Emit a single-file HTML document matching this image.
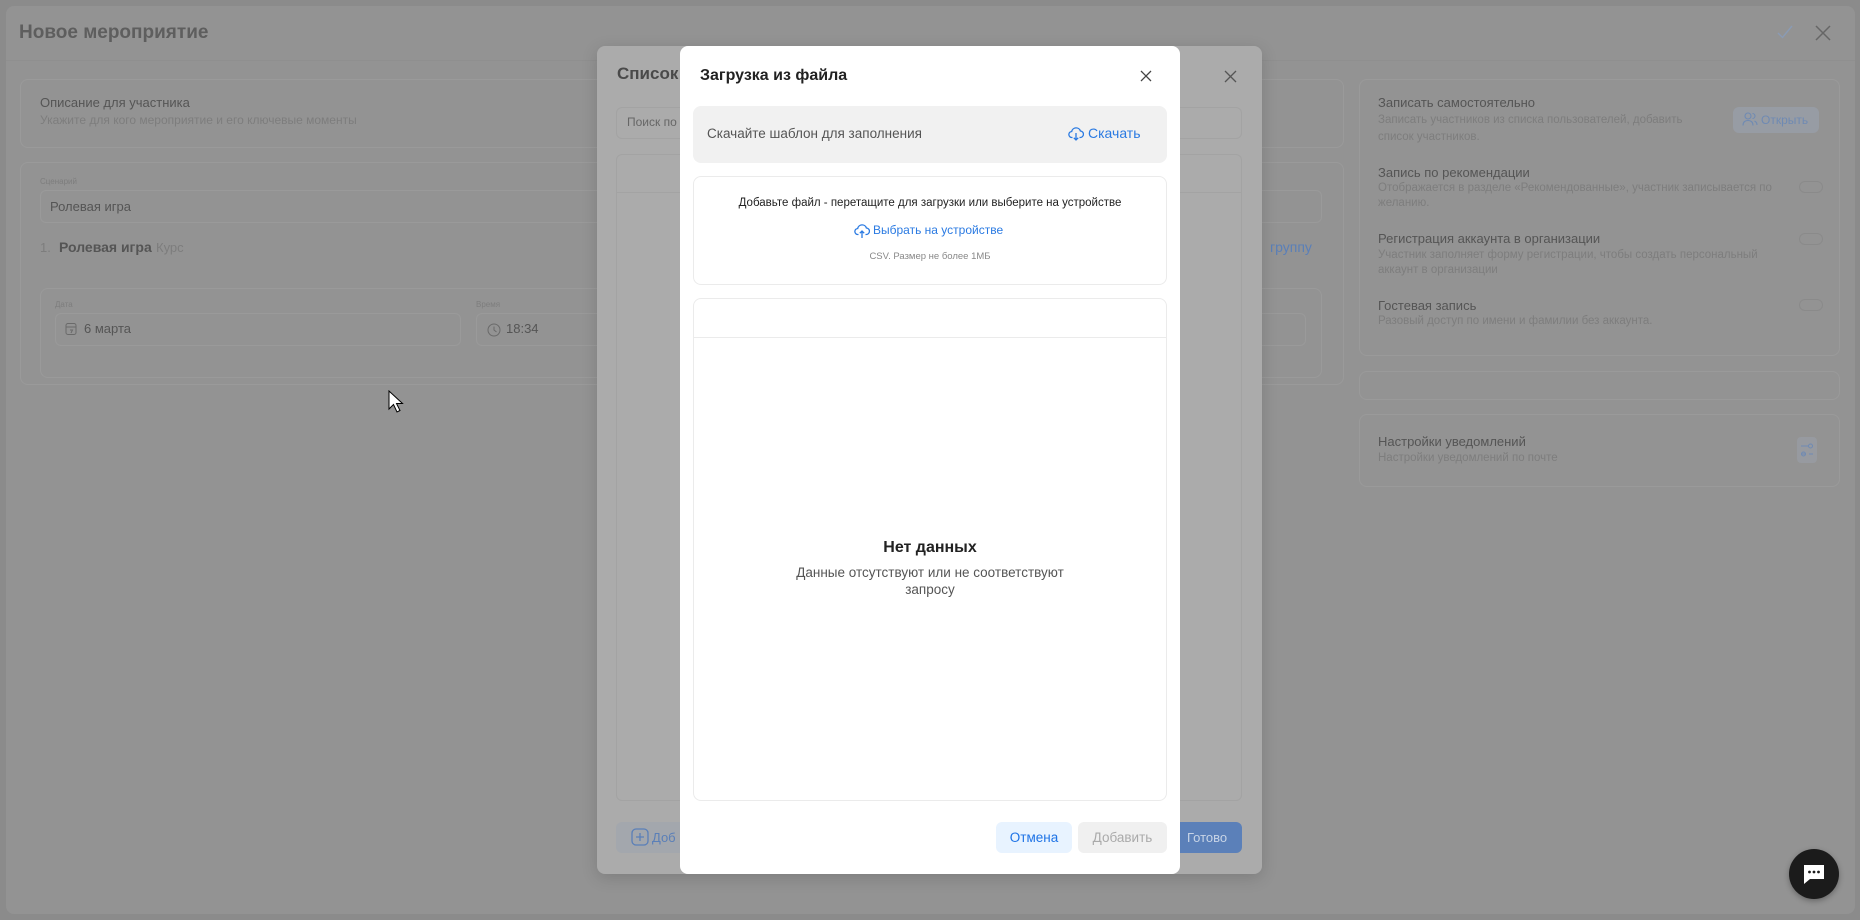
<!DOCTYPE html>
<html><head><meta charset="utf-8">
<style>
*{box-sizing:border-box;margin:0;padding:0}
body{width:1860px;height:920px;overflow:hidden;background:#8b8b8b;font-family:"Liberation Sans",sans-serif;position:relative}
.abs{position:absolute}
.panel{left:6px;top:6px;width:1849px;height:908px;background:#939393;border-radius:8px}
.card{position:absolute;border:1px solid #9a9a9a;border-radius:8px}
.g1{color:#555}.g2{color:#7d7d7d}
.inp{position:absolute;border:1px solid #9a9a9a;border-radius:6px}
.m2{left:597px;top:46px;width:665px;height:828px;background:#ababab;border-radius:8px;box-shadow:0 4px 16px rgba(0,0,0,.15)}
.m1{left:680px;top:46px;width:500px;height:828px;background:#fff;border-radius:8px}
.tog{position:absolute;width:24px;height:12px;border:1px solid #8a8a8a;border-radius:7px}
</style></head><body>
<div class="abs panel"></div>
<div class="abs" style="left:19px;top:22px;font-size:19px;font-weight:bold;color:#5e5e5e">Новое мероприятие</div>
<div class="abs" style="left:6px;top:60px;width:1849px;height:1px;background:#8f8f8f"></div>
<svg class="abs" style="left:1777px;top:25px" width="16" height="14"><path d="M1 8L5.5 12.5L15 1" fill="none" stroke="#8a9bb4" stroke-width="1.4"/></svg>
<svg class="abs" style="left:1815px;top:25px" width="16" height="16"><path d="M1 1L15 15M15 1L1 15" stroke="#666" stroke-width="1.5"/></svg>

<div class="card" style="left:20px;top:79px;width:1324px;height:69px"></div>
<div class="abs g1" style="left:40px;top:95px;font-size:13px">Описание для участника</div>
<div class="abs g2" style="left:40px;top:113px;font-size:12px">Укажите для кого мероприятие и его ключевые моменты</div>
<div class="card" style="left:20px;top:162px;width:1324px;height:223px"></div>
<div class="abs g2" style="left:40px;top:177px;font-size:8px">Сценарий</div>
<div class="inp" style="left:40px;top:190px;width:1282px;height:33px"></div>
<div class="abs g1" style="left:50px;top:199px;font-size:13px">Ролевая игра</div>
<div class="abs g2" style="left:40px;top:240px;font-size:13px">1.</div>
<div class="abs g1" style="left:59px;top:239px;font-size:14px;font-weight:bold">Ролевая игра</div>
<div class="abs g2" style="left:156px;top:240px;font-size:13px">Курс</div>
<div class="abs" style="left:1270px;top:239px;font-size:14px;color:#5a7fb8">группу</div>
<div class="card" style="left:40px;top:288px;width:1282px;height:90px"></div>
<div class="abs g2" style="left:55px;top:300px;font-size:8px">Дата</div>
<div class="inp" style="left:55px;top:313px;width:406px;height:33px"></div>
<svg class="abs" style="left:65px;top:322px" width="12" height="14" fill="none" stroke="#6a6a6a" stroke-width="1"><rect x="1" y="1.5" width="10" height="11" rx="2"/><path d="M1 5H11M5 8H7.5L6 11"/></svg>
<div class="abs g1" style="left:84px;top:321px;font-size:13px">6 марта</div>
<div class="abs g2" style="left:476px;top:300px;font-size:8px">Время</div>
<div class="inp" style="left:476px;top:313px;width:830px;height:33px"></div>
<svg class="abs" style="left:487px;top:323px" width="14" height="14" fill="none" stroke="#6a6a6a" stroke-width="1"><circle cx="7" cy="7" r="6"/><path d="M7 3.5V7L9.5 9"/></svg>
<div class="abs g1" style="left:506px;top:321px;font-size:13px">18:34</div>

<div class="card" style="left:1359px;top:79px;width:481px;height:277px"></div>
<div class="abs g1" style="left:1378px;top:95px;font-size:13px">Записать самостоятельно</div>
<div class="abs g2" style="left:1378px;top:112px;font-size:11.5px;line-height:17px;width:320px">Записать участников из списка пользователей, добавить список участников.</div>
<div class="abs" style="left:1733px;top:107px;width:86px;height:26px;background:#979ca4;border-radius:6px;color:#6f8ab3;font-size:12px;padding:6px 0 0 28px">Открыть</div>
<svg class="abs" style="left:1742px;top:111px" width="16" height="16" fill="none" stroke="#6f8ab3" stroke-width="1.1"><circle cx="6" cy="5" r="3"/><path d="M1 14.5C1 11 3 9.5 6 9.5S11 11 11 14.5M10.5 2.5A2.5 2.5 0 0 1 10.5 7.5M12.5 10C14 10.7 15 12 15 14"/></svg>
<div class="abs g1" style="left:1378px;top:165px;font-size:13px">Запись по рекомендации</div>
<div class="abs g2" style="left:1378px;top:181px;font-size:11.5px;line-height:15px;width:400px">Отображается в разделе «Рекомендованные», участник записывается по желанию.</div>
<div class="tog" style="left:1799px;top:181px"></div>
<div class="abs g1" style="left:1378px;top:231px;font-size:13px">Регистрация аккаунта в организации</div>
<div class="abs g2" style="left:1378px;top:248px;font-size:11.5px;line-height:15px;width:400px">Участник заполняет форму регистрации, чтобы создать персональный аккаунт в организации</div>
<div class="tog" style="left:1799px;top:233px"></div>
<div class="abs g1" style="left:1378px;top:298px;font-size:13px">Гостевая запись</div>
<div class="abs g2" style="left:1378px;top:315px;font-size:11.5px">Разовый доступ по имени и фамилии без аккаунта.</div>
<div class="tog" style="left:1799px;top:299px"></div>
<div class="card" style="left:1359px;top:371px;width:481px;height:29px"></div>
<div class="card" style="left:1359px;top:414px;width:481px;height:73px"></div>
<div class="abs g1" style="left:1378px;top:434px;font-size:13px">Настройки уведомлений</div>
<div class="abs g2" style="left:1378px;top:452px;font-size:11.5px">Настройки уведомлений по почте</div>
<div class="abs" style="left:1797px;top:437px;width:20px;height:26px;background:#979aa0;border-radius:4px"></div>
<svg class="abs" style="left:1800px;top:442px" width="14" height="16" fill="none" stroke="#6f8ab3" stroke-width="1"><path d="M1 4H8M1 12H6"/><circle cx="10.5" cy="4" r="2"/><circle cx="3.5" cy="12" r="2"/><path d="M9 12H13"/></svg>

<div class="abs m2"></div>
<div class="abs" style="left:617px;top:64px;font-size:17px;font-weight:bold;color:#4a4a4a">Список</div>
<svg class="abs" style="left:1224px;top:70px" width="13" height="13"><path d="M1 1L12 12M12 1L1 12" stroke="#555" stroke-width="1.3"/></svg>
<div class="inp" style="left:616px;top:107px;width:626px;height:32px;border-color:#a3a3a3"></div>
<div class="abs g1" style="left:627px;top:115px;font-size:12px;color:#666">Поиск по</div>
<div class="inp" style="left:616px;top:154px;width:626px;height:647px;border-color:#a3a3a3"></div>
<div class="abs" style="left:616px;top:192px;width:626px;height:1px;background:#a3a3a3"></div>
<div class="abs" style="left:616px;top:822px;width:90px;height:31px;background:#a3a7ad;border-radius:6px;color:#5a7fb8;font-size:13px;padding:8px 0 0 36px">Доб</div>
<svg class="abs" style="left:631px;top:828px" width="18" height="18" fill="none" stroke="#5a7fb8" stroke-width="1.3"><rect x="1" y="1" width="16" height="16" rx="4"/><path d="M9 5V13M5 9H13"/></svg>
<div class="abs" style="left:1165px;top:822px;width:77px;height:31px;background:#5b80b9;border-radius:6px;color:#c8d4e6;font-size:13px;padding:8px 0 0 22px">Готово</div>

<div class="abs m1"></div>
<div class="abs" style="left:700px;top:67px;font-size:16px;font-weight:bold;color:#222">Загрузка из файла</div>
<svg class="abs" style="left:1140px;top:70px" width="12" height="12"><path d="M1 1L11 11M11 1L1 11" stroke="#444" stroke-width="1.3"/></svg>
<div class="abs" style="left:693px;top:106px;width:474px;height:57px;background:#f1f1f1;border-radius:8px"></div>
<div class="abs" style="left:707px;top:126px;font-size:13.5px;color:#555">Скачайте шаблон для заполнения</div>
<svg class="abs" style="left:1068px;top:126px" width="16" height="16" fill="none" stroke="#2a7ae2" stroke-width="1.3"><path d="M4.5 11.5H4a3 3 0 0 1-.3-6A4.5 4.5 0 0 1 12.4 5 3 3 0 0 1 12 11.5h-.5M8 7v7m-2.2-2.2L8 14l2.2-2.2"/></svg>
<div class="abs" style="left:1088px;top:125px;font-size:14px;color:#2a7ae2">Скачать</div>
<div class="abs" style="left:693px;top:176px;width:474px;height:109px;border:1px solid #ebebeb;border-radius:8px"></div>
<div class="abs" style="left:693px;top:197px;width:474px;text-align:center;font-size:11.5px;color:#222">Добавьте файл - перетащите для загрузки или выберите на устройстве</div>
<svg class="abs" style="left:854px;top:223px" width="16" height="16" fill="none" stroke="#2a7ae2" stroke-width="1.3"><path d="M4.5 11.5H4a3 3 0 0 1-.3-6A4.5 4.5 0 0 1 12.4 5 3 3 0 0 1 12 11.5h-.5M8 15V8m-2.2 2.2L8 8l2.2 2.2"/></svg>
<div class="abs" style="left:873px;top:223px;font-size:12px;color:#2a7ae2">Выбрать на устройстве</div>
<div class="abs" style="left:693px;top:251px;width:474px;text-align:center;font-size:9.5px;color:#888">CSV. Размер не более 1МБ</div>
<div class="abs" style="left:693px;top:298px;width:474px;height:503px;border:1px solid #ebebeb;border-radius:8px"></div>
<div class="abs" style="left:694px;top:337px;width:472px;height:1px;background:#ebebeb"></div>
<div class="abs" style="left:693px;top:539px;width:474px;text-align:center;font-size:16px;font-weight:bold;color:#222">Нет данных</div>
<div class="abs" style="left:780px;top:564px;width:300px;text-align:center;font-size:13.5px;line-height:17px;color:#555">Данные отсутствуют или не соответствуют запросу</div>
<div class="abs" style="left:996px;top:822px;width:76px;height:31px;background:#e8f3ff;border-radius:6px;color:#1e73e6;font-size:13.5px;text-align:center;line-height:31px">Отмена</div>
<div class="abs" style="left:1078px;top:822px;width:89px;height:31px;background:#f0f0f0;border-radius:6px;color:#aaa;font-size:13.5px;text-align:center;line-height:31px">Добавить</div>

<svg class="abs" style="left:388px;top:390px" width="16" height="24"><path d="M1 1V19L5.5 14.5 9 22 12 20.5 8.5 13.5H14.5Z" fill="#fff" stroke="#000" stroke-width="1"/></svg>
<div class="abs" style="left:1789px;top:849px;width:50px;height:50px;border-radius:50%;background:#1b1b1b;box-shadow:0 2px 6px rgba(0,0,0,.3)"></div>
<svg class="abs" style="left:1801px;top:862px" width="26" height="24"><path d="M3 3H23V17H9L3 22Z" fill="#fff"/><circle cx="8.5" cy="10" r="1.4" fill="#1b1b1b"/><circle cx="13" cy="10" r="1.4" fill="#1b1b1b"/><circle cx="17.5" cy="10" r="1.4" fill="#1b1b1b"/></svg>
</body></html>
